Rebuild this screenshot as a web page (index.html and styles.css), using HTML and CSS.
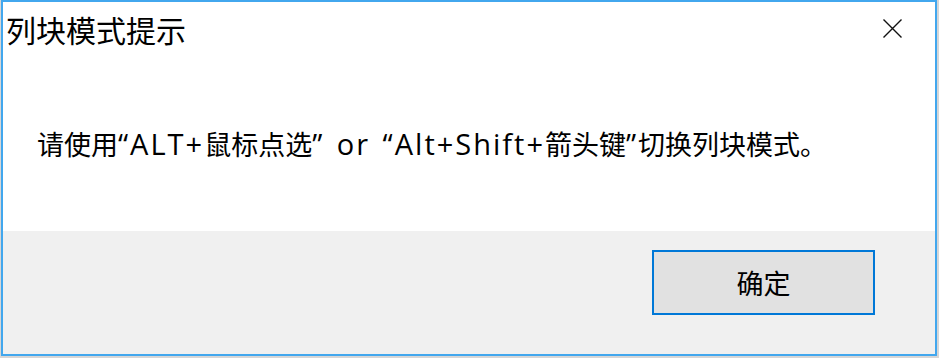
FILE: index.html
```html
<!DOCTYPE html>
<html lang="zh-CN">
<head>
<meta charset="utf-8">
<title>列块模式提示</title>
<link rel="stylesheet" href="styles.css">
</head>
<body>
<div class="window">
  <div class="content">
    <div class="titlebar">
      <span class="title">列块模式提示</span>
      <span class="close" aria-label="关闭">
        <svg width="19" height="19" viewBox="0 0 19 19"><path d="M0.5 0.5 L18.5 18.5 M18.5 0.5 L0.5 18.5" stroke="#111" stroke-width="1.4" fill="none"/></svg>
      </span>
    </div>
    <div class="message">请使用<span class="lat">“ALT+</span>鼠标点选<span class="lat">” or “Alt+Shift+</span>箭头键<span class="lat">”</span>切换列块模式。</div>
  </div>
  <div class="footer">
    <button class="ok">确定</button>
  </div>
</div>
</body>
</html>
```
FILE: styles.css
```css
html, body {
  margin: 0;
  padding: 0;
}
body {
  width: 939px;
  height: 358px;
  background: #d6d6d6;
  font-family: "Noto Sans CJK SC", "Noto Sans", sans-serif;
  color: #000;
  overflow: hidden;
}
.window {
  margin-left: 1px;
  width: 932px;
  height: 352px;
  border: 2px solid #42a7ee;
  display: flex;
  flex-direction: column;
  background: #ffffff;
}
.content {
  height: 229px;
  background: #ffffff;
  display: flex;
  flex-direction: column;
}
.titlebar {
  display: flex;
  justify-content: space-between;
  align-items: flex-start;
  height: 64px;
}
.title {
  font-size: 30px;
  line-height: 40px;
  padding-left: 3px;
  padding-top: 7px;
}
.close {
  display: block;
  margin-top: 17px;
  margin-right: 33px;
  height: 19px;
}
.close svg { display: block; }
.message {
  font-family: "Noto Sans CJK SC", sans-serif;
  font-size: 27px;
  line-height: 36px;
  padding-left: 34px;
  padding-top: 60px;
  white-space: nowrap;
}
.lat {
  font-family: "Open Sans", "Noto Sans", sans-serif;
  font-size: 29px;
  letter-spacing: 2px;
  word-spacing: 3px;
}
.footer {
  flex: 1;
  background: #f0f0f0;
  display: flex;
  justify-content: flex-end;
  align-items: flex-start;
  padding-top: 19px;
  padding-right: 60px;
}
.ok {
  width: 223px;
  height: 65px;
  box-sizing: border-box;
  border: 2px solid #0078d7;
  background: #e1e1e1;
  font-family: "Noto Sans CJK SC", sans-serif;
  font-size: 27px;
  color: #000;
  padding: 0;
  margin: 0;
}
```
